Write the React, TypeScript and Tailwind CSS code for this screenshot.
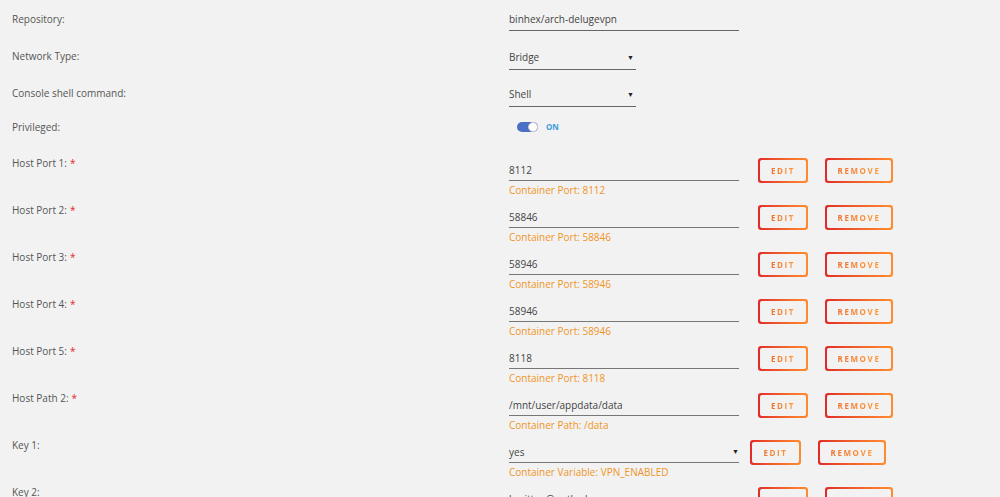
import React from 'react'

const font = { fontFamily: '"Open Sans", "Noto Sans", sans-serif' }

function Label({ text, required }: { text: string; required?: boolean }) {
  return (
    <div className="w-[509px] shrink-0 pl-[12px] text-[10px] leading-[12px] text-[#555]">
      {text}
      {required && <span className="ml-[3px] text-[#e22828]">*</span>}
    </div>
  )
}

function Btn({ label, w }: { label: string; w: string }) {
  return (
    <div className={`rounded-[3px] bg-gradient-to-r from-[#e22828] to-[#ff8c2f] p-[2px] ${w} h-[25px]`}>
      <div className="flex h-full w-full items-center justify-center rounded-[2px] bg-[#f2f2f2]">
        <span className="bg-gradient-to-r from-[#f0702a] to-[#ff9a3a] bg-clip-text text-[8px] font-bold tracking-[1.6px] text-transparent">
          {label}
        </span>
      </div>
    </div>
  )
}

function Arrow() {
  return <span className="text-[7px] leading-[12px] text-[#222]">▼</span>
}

function PortRow({ label, value, help, select, narrow }: { label: string; value: string; help: string; select?: boolean; narrow?: boolean }) {
  return (
    <div className="flex h-[47px] items-start">
      <div className="pt-[4px]">
        <Label text={label} required={!select} />
      </div>
      <div className="w-[230px] shrink-0 pt-[11px]">
        <div className="flex items-center justify-between border-b border-[#777] pb-[4px] text-[10px] leading-[12px] text-[#444]">
          <span>{value}</span>
          {select && <Arrow />}
        </div>
        <div className="mt-[3px] text-[10px] leading-[12px] text-[#f0951f]">{help}</div>
      </div>
      <div className={`flex gap-[17px] pt-[5px] ${narrow ? 'ml-[11px]' : 'ml-[19px]'}`}>
        <Btn label="EDIT" w={narrow ? 'w-[51px]' : 'w-[50px]'} />
        <Btn label="REMOVE" w="w-[68px]" />
      </div>
    </div>
  )
}

function TopRow({ label, value, width, select }: { label: string; value: string; width: string; select?: boolean }) {
  return (
    <div className="flex h-[37px] items-start pt-[13px]">
      <Label text={label} />
      <div className={`${width} flex items-center justify-between border-b border-[#666] pb-[5px] text-[10px] leading-[12px] text-[#444]`}>
        <span>{value}</span>
        {select && <span className="pr-[2px]"><Arrow /></span>}
      </div>
    </div>
  )
}

export default function App() {
  const ports = [
    { label: 'Host Port 1:', value: '8112', help: 'Container Port: 8112' },
    { label: 'Host Port 2:', value: '58846', help: 'Container Port: 58846' },
    { label: 'Host Port 3:', value: '58946', help: 'Container Port: 58946' },
    { label: 'Host Port 4:', value: '58946', help: 'Container Port: 58946' },
    { label: 'Host Port 5:', value: '8118', help: 'Container Port: 8118' },
    { label: 'Host Path 2:', value: '/mnt/user/appdata/data', help: 'Container Path: /data' },
  ]
  return (
    <div className="h-[497px] w-[1000px] overflow-hidden bg-[#f2f2f2]" style={font}>
      <TopRow label="Repository:" value="binhex/arch-delugevpn" width="w-[230px]" />
      <TopRow label="Network Type:" value="Bridge" width="w-[127px]" select />
      <TopRow label="Console shell command:" value="Shell" width="w-[127px]" select />
      <div className="flex h-[42px] items-start pt-[10px]">
        <Label text="Privileged:" />
        <div className="ml-[8px] flex items-center gap-[8px] pt-[1px]">
          <div className="relative h-[10px] w-[21px] rounded-full bg-[#4a6fc4]">
            <div className="absolute right-0 top-0 h-[10px] w-[10px] rounded-full border border-[#ccc] bg-white" />
          </div>
          <span className="text-[8px] font-bold leading-[10px] text-[#3a9ddc]">ON</span>
        </div>
      </div>
      {ports.map((p) => (
        <PortRow key={p.label} {...p} />
      ))}
      <PortRow label="Key 1:" value="yes" help="Container Variable: VPN_ENABLED" select narrow />
      <div className="flex h-[47px] items-start">
        <div className="pt-[4px]">
          <Label text="Key 2:" />
        </div>
        <div className="w-[230px] shrink-0 pt-[11px] text-[10px] leading-[12px] text-[#444]">bmitten@outlook.com</div>
        <div className="ml-[19px] flex gap-[17px] pt-[5px]">
          <Btn label="EDIT" w="w-[50px]" />
          <Btn label="REMOVE" w="w-[68px]" />
        </div>
      </div>
    </div>
  )
}
